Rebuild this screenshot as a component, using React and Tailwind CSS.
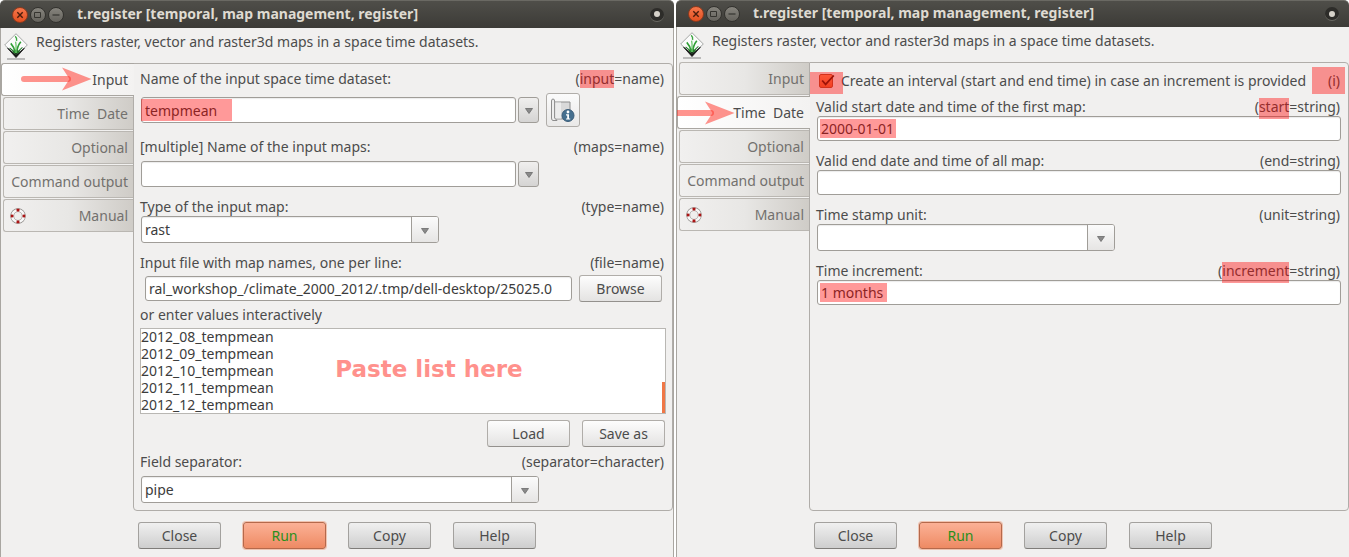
import { useState } from "react";

const FIELD =
  "block rounded-[3px] border border-[#a09d98] bg-white px-[3px] text-[#3c3c3c] outline-none shadow-[inset_0_1px_1px_rgba(0,0,0,0.08)]";

function GrassLogo() {
  return (
    <svg viewBox="0 0 24 27" className="h-[27px] w-6 shrink-0" aria-hidden="true">
      <path d="M12 0.7 L23.3 12 L12 23.3 L0.7 12 Z" fill="#fbfbfb" stroke="#a5a8a5" strokeWidth="1" />
      <path d="M3.6 15.2 L12 22 L20.4 15.2 L12 24.6 Z" fill="#141414" stroke="#141414" strokeWidth="0.8" />
      <path d="M8.5 18 L12 16.5 L15.5 18 L12 22.4 Z" fill="#1c3d1e" />
      <path d="M11.4 20 C10.6 15.5 9.6 13.4 6.8 10.4 M12.7 20 C13 15.4 14.2 12 16.8 8.8" fill="none" stroke="#2f9f35" strokeWidth="1.6" />
      <path d="M12 20 C12 15 12.4 12 11.6 8.6" fill="none" stroke="#6cc56c" strokeWidth="1.3" />
      <path d="M11.2 3.2 C12.6 4.4 12.9 6 12.6 7.8" fill="none" stroke="#3aa53f" strokeWidth="1.4" />
      <path d="M10 20 C9.2 17.8 8 16.4 5.6 15 M14 20 C14.8 17.6 16 16.2 18.4 14.4" fill="none" stroke="#237a2a" strokeWidth="1.1" />
      <path d="M3 26 H21" stroke="#858585" strokeWidth="1" />
    </svg>
  );
}

function LifeRing() {
  return (
    <svg viewBox="0 0 16 16" className="size-4" aria-hidden="true">
      <circle cx="8" cy="8" r="5.8" fill="none" stroke="#8a8683" strokeWidth="3.8" />
      <circle cx="8" cy="8" r="5.8" fill="none" stroke="#f8f8f8" strokeWidth="2.6" />
      <path d="M6.4 0.8 H9.6 L9.3 3.4 H6.7 Z M6.4 15.2 H9.6 L9.3 12.6 H6.7 Z M0.8 6.4 V9.6 L3.4 9.3 V6.7 Z M15.2 6.4 V9.6 L12.6 9.3 V6.7 Z" fill="#ab1414" />
    </svg>
  );
}

function MapInfoIcon() {
  return (
    <svg viewBox="0 0 26 24" className="h-6 w-[26px]" aria-hidden="true">
      <path d="M4 4 H20 V21 H4 Z" fill="#d9d9d9" stroke="#8d8d8d" />
      <path d="M5 4.5 H11 V20.5 H5 Z" fill="#ececec" />
      <path d="M1.5 3 Q1.5 1 3 1 Q4.6 1 4.6 3 V20 L7 22.5 H3 Q1.5 22.5 1.5 20 Z" fill="#eeeeee" stroke="#8d8d8d" />
      <circle cx="18" cy="17.5" r="6" fill="#46708f" stroke="#3a5c78" />
      <circle cx="18" cy="14" r="1.4" fill="#fff" />
      <path d="M16 16.3 H19 V20.4 H20.2 V21.6 H16 V20.4 H17.2 V17.5 H16 Z" fill="#fff" />
    </svg>
  );
}

function Triangle() {
  return (
    <svg viewBox="0 0 8 6" className="mt-0.5 h-1.5 w-2" aria-hidden="true">
      <path d="M0.5 0.5 H7.5 L4 5.5 Z" fill="#8a8a8a" stroke="#6a6a6a" strokeWidth="0.8" />
    </svg>
  );
}

function Arrow({ short }) {
  return (
    <svg
      viewBox={short ? "14 0 58 24" : "0 0 72 24"}
      className={
        short
          ? "pointer-events-none absolute top-1 -left-px h-6 w-[58px]"
          : "pointer-events-none absolute top-[3px] left-[18px] h-6 w-[72px]"
      }
      aria-hidden="true"
    >
      <path d="M4 12 H48" stroke="#ff2a1e" strokeOpacity="0.5" strokeWidth="6" strokeLinecap="round" />
      <path d="M42 0.5 L71.5 12 L42 23.5 L49.5 12 Z" fill="#ff2a1e" fillOpacity="0.5" />
    </svg>
  );
}

function TitleBar({ compact }) {
  return (
    <header
      className={`flex items-center rounded-t-[5px] border-t border-[#6a6963] bg-linear-to-b from-[#4f4e49] to-[#3c3b37] pr-2.5 pl-3 ${
        compact ? "h-[27px]" : "h-7"
      }`}
    >
      <div className="flex gap-0.5">
        <button aria-label="Close window" className="size-4 rounded-full border border-[#8f3a1d] bg-linear-to-b from-[#f5764a] to-[#e2501f]">
          <svg viewBox="0 0 14 14" className="size-3.5"><path d="M4.3 4.3 L9.7 9.7 M9.7 4.3 L4.3 9.7" stroke="#4a1c0c" strokeWidth="1.4" /></svg>
        </button>
        <button aria-label="Maximize window" className="size-4 rounded-full border border-[#33322e] bg-linear-to-b from-[#86847d] to-[#65635d]">
          <svg viewBox="0 0 14 14" className="size-3.5"><path d="M3.5 4.5 H9.5 V9.5 H3.5 Z" fill="none" stroke="#35342f" /></svg>
        </button>
        <button aria-label="Minimize window" className="size-4 rounded-full border border-[#33322e] bg-linear-to-b from-[#86847d] to-[#65635d]">
          <svg viewBox="0 0 14 14" className="size-3.5"><path d="M3.5 7 H10.5" stroke="#35342f" strokeWidth="1.2" /></svg>
        </button>
      </div>
      <h1 className="ml-[13px] flex-1 pb-0.5 text-sm leading-5 font-bold whitespace-nowrap text-[#dfdbd2]">
        t.register [temporal, map management, register]
      </h1>
      <span className="flex size-3.5 items-center justify-center rounded-full border-b border-[#6b6a64] bg-[#2d2c29]">
        <span className="size-1.5 rounded-full bg-[#d6d2ca]" />
      </span>
    </header>
  );
}

const TABS = ["Input", "Time  Date", "Optional", "Command output", "Manual"];

function Tabs({ active }) {
  return (
    <nav className="relative z-10 flex w-[132px] shrink-0 flex-col gap-px" role="tablist">
      {TABS.map((name, i) => {
        const selected = i === active;
        return (
          <button
            key={name}
            role="tab"
            aria-selected={selected}
            className={`relative flex h-[33px] items-center justify-end rounded-l-[3px] border border-r-0 whitespace-pre ${
              selected
                ? "-mr-px border-[#a9a6a1] bg-linear-to-r from-white to-[#f3f2f1] pr-1.5 text-[#4c4c4c]"
                : "ml-0.5 border-[#bab7b2] bg-linear-to-r from-[#f1f0ef] via-[#e8e7e5] to-[#cfccc7] pr-[5px] text-[#73716e]"
            }`}
          >
            {name === "Manual" && (
              <span className="mr-auto ml-1.5">
                <LifeRing />
              </span>
            )}
            {name}
            {selected && <Arrow short={i === 1} />}
          </button>
        );
      })}
    </nav>
  );
}

function Label({ htmlFor, text, mark, hint, tall }) {
  return (
    <div className="flex h-[18px] justify-between pr-px leading-[18px] whitespace-nowrap">
      <label htmlFor={htmlFor}>{text}</label>
      <span>
        ({mark ? (
          <span
            className={`relative z-10 inline-block h-[18px] after:pointer-events-none after:absolute after:inset-x-0 after:top-0 after:bg-[#ff0000]/40 ${
              tall ? "after:h-[21px]" : "after:h-[18px]"
            }`}
          >
            {mark}
          </span>
        ) : null}
        {hint})
      </span>
    </div>
  );
}

function Combo({ id, options, className }) {
  return (
    <div className={`relative ml-px h-[27px] ${className}`}>
      <select id={id} className={`${FIELD} size-full appearance-none`}>
        {options.map((o) => (
          <option key={o}>{o}</option>
        ))}
      </select>
      <span className="pointer-events-none absolute inset-y-px right-px flex w-[27px] items-center justify-center rounded-r-[2px] border-l border-[#a09d98] bg-linear-to-b from-[#fbfbfb] to-[#e6e5e4]">
        <Triangle />
      </span>
    </div>
  );
}

function Entry({ id, value, mark }) {
  const [text, setText] = useState(value);
  return (
    <div className="relative ml-px">
      <input id={id} value={text} onChange={(e) => setText(e.target.value)} className={`${FIELD} h-[25px] w-full`} />
      {mark && <span className={`pointer-events-none absolute inset-y-[3px] left-[3px] bg-[#ff0000]/40 ${mark}`} />}
    </div>
  );
}

function DatasetField({ id, value, mark }) {
  const [text, setText] = useState(value);
  return (
    <>
      <div className="relative ml-px w-[375px]">
        <input id={id} value={text} onChange={(e) => setText(e.target.value)} className={`${FIELD} h-[26px] w-full`} />
        {mark && <span className="pointer-events-none absolute inset-y-0.5 left-0 w-[91px] bg-[#ff0000]/40" />}
      </div>
      <button
        aria-label="Show choices"
        className="ml-0.5 flex h-[26px] w-[21px] items-center justify-center rounded-[3px] border border-[#a09d98] bg-linear-to-b from-[#f0efee] to-[#d5d4d3]"
      >
        <Triangle />
      </button>
    </>
  );
}

function LightButton({ children }) {
  return (
    <button className="h-[27px] w-[83px] rounded-[3px] border border-[#b0ada9] border-b-[#94918d] bg-linear-to-b from-[#fdfdfd] to-[#e4e3e2]">
      {children}
    </button>
  );
}

function Footer() {
  const grey = "border-[#a3a19e] border-b-[#7f7d7a] bg-linear-to-b from-[#f0f0f0] to-[#cecece]";
  return (
    <footer className="flex gap-[22px] pt-[11px] pb-2 pl-[137px]">
      {["Close", "Run", "Copy", "Help"].map((name) => (
        <button
          key={name}
          className={`h-[27px] w-[83px] rounded-[3px] border ${
            name === "Run"
              ? "border-[#b5694b] bg-linear-to-b from-[#fbb196] to-[#ee8a63] text-[#2a8f1c] shadow-[0_0_0_1px_rgba(240,140,100,0.45)]"
              : grey
          }`}
        >
          {name}
        </button>
      ))}
    </footer>
  );
}

function Dialog({ active, compact, children }) {
  return (
    <section className="flex min-w-0 flex-col">
      <TitleBar compact={compact} />
      <div className={`flex flex-1 flex-col border-l border-[#a9a6a1] bg-[#f1f0ef] ${compact ? "" : "border-r"}`}>
        <div className="flex h-[35px] items-start gap-2 pt-[5px] pl-[3px]">
          <GrassLogo />
          <p className="leading-[18px] whitespace-nowrap">
            Registers raster, vector and raster3d maps in a space time datasets.
          </p>
        </div>
        <div className="flex flex-1">
          <Tabs active={active} />
          <main className="flex min-w-0 flex-1 flex-col rounded-r-[4px] rounded-bl-[4px] border border-[#b0ada9] pr-[7px] pl-1.5">
            {children}
          </main>
        </div>
        <Footer />
      </div>
    </section>
  );
}

const MAP_NAMES = ["2012_08_tempmean", "2012_09_tempmean", "2012_10_tempmean", "2012_11_tempmean", "2012_12_tempmean"];

function InputPage() {
  return (
    <div className="flex flex-col gap-[11px] pt-1.5 pb-[7px]">
      <div>
        <Label htmlFor="dataset" text="Name of the input space time dataset:" mark="input" hint="=name" />
        <div className="mt-[5px] flex h-[34px] items-center">
          <DatasetField id="dataset" value="tempmean" mark />
          <button
            aria-label="Dataset information"
            className="ml-[7px] flex h-[34px] w-[34px] items-center justify-center rounded-[3px] border border-[#b0ada9] bg-linear-to-b from-[#fbfbfb] to-[#eae9e8]"
          >
            <MapInfoIcon />
          </button>
        </div>
      </div>
      <div>
        <Label htmlFor="maps" text="[multiple] Name of the input maps:" hint="maps=name" />
        <div className="mt-[5px] flex">
          <DatasetField id="maps" value="" />
        </div>
      </div>
      <div>
        <Label htmlFor="type" text="Type of the input map:" hint="type=name" />
        <Combo id="type" options={["rast", "vect", "rast3d"]} className="w-[298px]" />
      </div>
      <div>
        <Label htmlFor="file" text="Input file with map names, one per line:" hint="file=name" />
        <div className="mt-[3px] flex items-center gap-[7px] pr-[3px] pl-[5px]">
          <input
            id="file"
            defaultValue="ral_workshop_/climate_2000_2012/.tmp/dell-desktop/25025.0"
            className={`${FIELD} h-[25px] min-w-0 flex-1`}
          />
          <LightButton>Browse</LightButton>
        </div>
        <label htmlFor="list" className="mt-1 block leading-[18px]">
          or enter values interactively
        </label>
        <div className="relative mt-1 -mr-px border border-[#b9b7b3] bg-white">
          <textarea
            id="list"
            defaultValue={MAP_NAMES.join("\n")}
            className="-mt-px block h-[85px] w-full resize-none overflow-hidden text-[#3c3c3c] outline-none"
          />
          <span className="pointer-events-none absolute right-0 bottom-0 h-[31px] w-[3px] bg-[#f07746]" />
          <span className="pointer-events-none absolute inset-x-0 top-[26px] pl-[52px] text-center font-['DejaVu_Sans'] text-[23px] leading-7 font-bold text-[#ff918c]">
            Paste list here
          </span>
        </div>
        <div className="mt-1.5 flex justify-end gap-3">
          <LightButton>Load</LightButton>
          <LightButton>Save as</LightButton>
        </div>
        <div className="mt-1.5 mb-[5px]">
          <Label htmlFor="separator" text="Field separator:" hint="separator=character" />
        </div>
        <Combo id="separator" options={["pipe", "comma", "space", "tab"]} className="w-[398px]" />
      </div>
    </div>
  );
}

function TimeDatePage() {
  const [checked, setChecked] = useState(true);
  return (
    <div className="flex flex-col gap-[11px] pt-1 pb-[7px]">
      <div>
        <div className="mb-1 -ml-1.5 flex h-[27px] items-center">
          <span className="relative mt-1 flex h-[22px] w-8 shrink-0 items-center pl-[9px]">
            <input
              id="interval"
              type="checkbox"
              checked={checked}
              onChange={(e) => setChecked(e.target.checked)}
              className="mb-1 size-3.5 appearance-none rounded-[2px] border border-[#b5532f] bg-linear-to-b from-[#fb8f5e] to-[#ea6a38]"
            />
            {checked && (
              <svg viewBox="0 0 16 14" className="pointer-events-none absolute top-[2px] left-[9px] h-3.5 w-4" aria-hidden="true">
                <path d="M3.2 6.5 L6.6 10.3 L14.8 1.5" fill="none" stroke="#5c1f0c" strokeWidth="1.8" />
              </svg>
            )}
            <span className="pointer-events-none absolute inset-0 -right-px bg-[#ff0000]/40" />
          </span>
          <label htmlFor="interval" className="-ml-px whitespace-nowrap">
            Create an interval (start and end time) in case an increment is provided
          </label>
          <span className="relative -mr-1 ml-auto flex h-[27px] w-[33px] items-center justify-end pr-[5px]">
            (i)
            <span className="pointer-events-none absolute inset-0 bg-[#ff0000]/40" />
          </span>
        </div>
        <Label htmlFor="start" text="Valid start date and time of the first map:" mark="start" hint="=string" tall />
        <Entry id="start" value="2000-01-01" mark="w-[76px]" />
      </div>
      <div>
        <Label htmlFor="end" text="Valid end date and time of all map:" hint="end=string" />
        <Entry id="end" value="" />
      </div>
      <div>
        <Label htmlFor="unit" text="Time stamp unit:" hint="unit=string" />
        <Combo id="unit" options={["", "years", "months", "days"]} className="w-[298px]" />
      </div>
      <div>
        <Label htmlFor="increment" text="Time increment:" mark="increment" hint="=string" tall />
        <Entry id="increment" value="1 months" mark="w-[67px]" />
      </div>
    </div>
  );
}

export default function App() {
  return (
    <div className="grid min-h-screen grid-cols-[674fr_673fr] gap-0.5 bg-white font-['Noto_Sans',sans-serif] text-sm leading-[17px] text-[#4c4c4c]">
      <Dialog active={0}>
        <InputPage />
      </Dialog>
      <Dialog active={1} compact>
        <TimeDatePage />
      </Dialog>
    </div>
  );
}
